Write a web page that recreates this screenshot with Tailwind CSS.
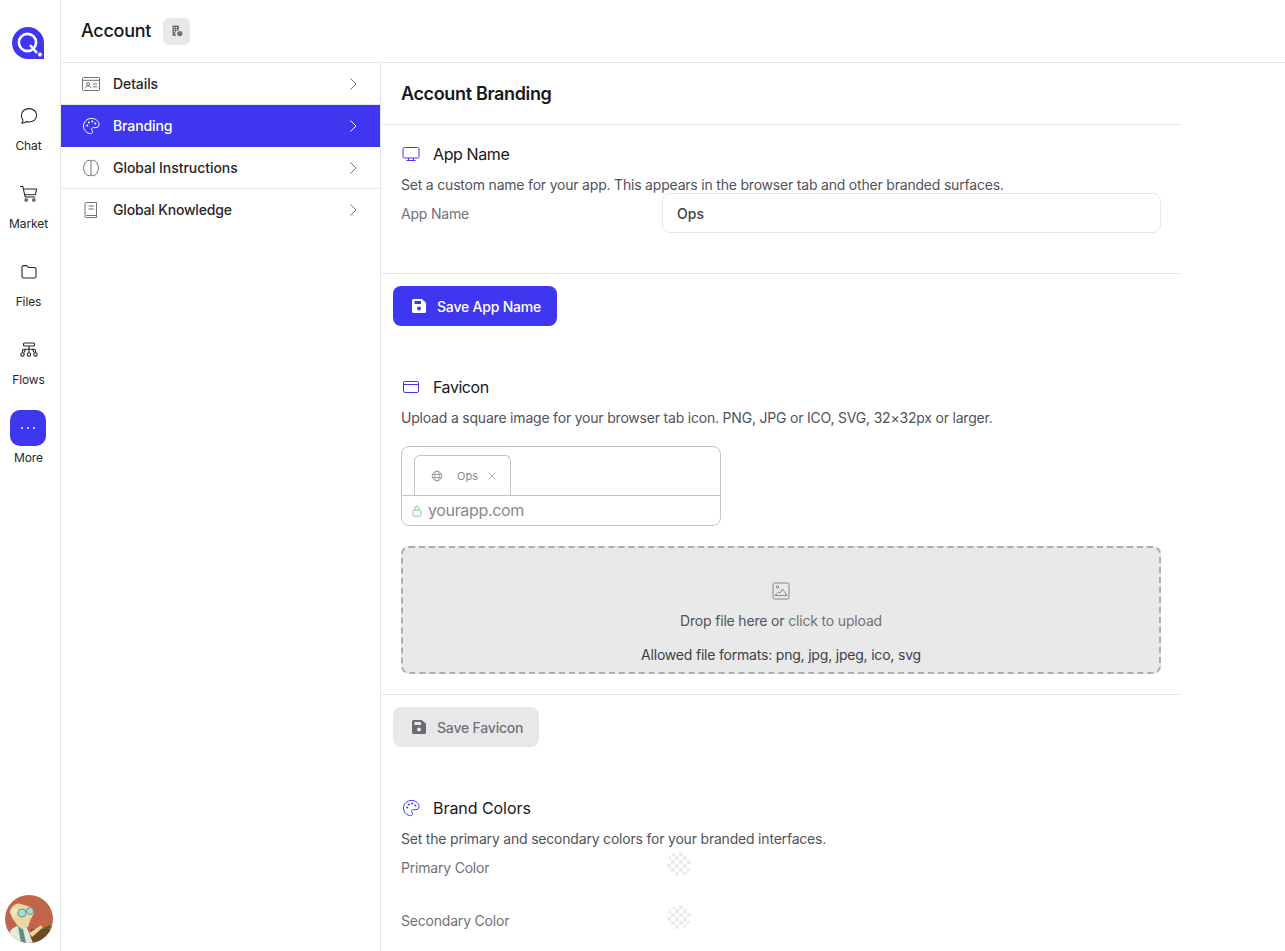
<!DOCTYPE html>
<html lang="en">
<head>
<meta charset="utf-8">
<title>Account Branding</title>
<script src="https://cdn.jsdelivr.net/npm/@tailwindcss/browser@4"></script>
</head>
<body class="bg-white">
<div class="flex h-[951px] w-[1285px] overflow-hidden bg-white font-['Inter',sans-serif] text-[#18181b] antialiased">

  <!-- Icon rail -->
  <aside class="flex h-full w-[61px] shrink-0 flex-col items-center border-r border-[#e8e8e8] bg-white pr-[3px]">
    <svg class="-ml-[2px] mt-[27px] h-[32px] w-[32px]" viewBox="0 0 32 32">
      <path d="M16 0C7.2 0 0 7.2 0 16s7.2 16 16 16h16V16C32 7.2 24.8 0 16 0z" fill="#3f37f0"/>
      <circle cx="15.5" cy="15.5" r="8.6" fill="none" stroke="#fff" stroke-width="2.6"/>
      <path d="M18 18l7 8" stroke="#fff" stroke-width="2.6"/>
      <path d="M28 25l2.5 2.5L28 30l-2.5-2.5z" fill="#fff"/>
    </svg>
    <nav class="mt-[39px] flex flex-col items-center">
      <div class="flex h-[78px] w-[57px] flex-col items-center pt-[8px]">
        <div class="flex h-[20px] w-[20px] items-center justify-center">
          <svg class="h-[20px] w-[20px]" viewBox="0 0 20 20" fill="none" stroke="#27272a" stroke-width="1.1" stroke-linejoin="round"><path d="M10 2.600c4.400 0 7.600 2.900 7.600 6.700S14.400 16 10 16c-1 0-1.900-.2-2.800-.4-1 .8-2.600 1.400-4.400 1.600.7-.9 1.100-1.900 1.200-3C2.900 13 2.400 11.300 2.400 9.300 2.400 5.500 5.600 2.600 10 2.600z"/></svg>
        </div>
        <span class="mt-[12px] text-[12px] leading-[16px] tracking-[-0.1px] text-[#27272a]">Chat</span>
      </div>
      <div class="flex h-[78px] w-[57px] flex-col items-center pt-[8px]">
        <svg class="h-[20px] w-[20px]" viewBox="0 0 20 20" fill="none" stroke="#27272a" stroke-width="1.1" stroke-linecap="round" stroke-linejoin="round"><path d="M1.500 2.500h2.300l2.400 10.500h9.600"/><path d="M4.400 5h13.200l-1.300 5.700H5.700"/><circle cx="7.200" cy="16" r="1.200"/><circle cx="14.800" cy="16" r="1.200"/></svg>
        <span class="mt-[12px] text-[12px] leading-[16px] tracking-[-0.1px] text-[#27272a]">Market</span>
      </div>
      <div class="flex h-[78px] w-[57px] flex-col items-center pt-[8px]">
        <svg class="h-[20px] w-[20px]" viewBox="0 0 20 20" fill="none" stroke="#27272a" stroke-width="1.1" stroke-linejoin="round"><path d="M3 5.200c0-.9.700-1.600 1.600-1.600h3.200l1.700 1.900h5.900c.9 0 1.600.7 1.600 1.600v7.300c0 .9-.7 1.600-1.600 1.600H4.600c-.9 0-1.600-.7-1.600-1.600z"/></svg>
        <span class="mt-[12px] text-[12px] leading-[16px] tracking-[-0.1px] text-[#27272a]">Files</span>
      </div>
      <div class="flex h-[78px] w-[57px] flex-col items-center pt-[8px]">
        <svg class="h-[20px] w-[20px]" viewBox="0 0 20 20" fill="none" stroke="#27272a" stroke-width="1.1" stroke-linejoin="round"><rect x="4.500" y="3" width="11" height="3" rx="1"/><path d="M10 6v3M3.500 12.500V10.500c0-.8.500-1.300 1.300-1.300h10.400c.8 0 1.300.5 1.300 1.300v2M10 9v3.500M6.500 9.200l-1.500 3.300M13.500 9.200l1.500 3.300"/><circle cx="3.500" cy="14.500" r="1.700"/><circle cx="10" cy="14.500" r="1.700"/><circle cx="16.500" cy="14.500" r="1.700"/></svg>
        <span class="mt-[12px] text-[12px] leading-[16px] tracking-[-0.1px] text-[#27272a]">Flows</span>
      </div>
      <div class="flex w-[57px] flex-col items-center">
        <div class="-ml-[2px] flex h-[36px] w-[36px] items-center justify-center gap-[4px] rounded-[10px] bg-[#3f37f0]">
          <span class="h-[2px] w-[2px] rounded-full bg-white"></span>
          <span class="h-[2px] w-[2px] rounded-full bg-white"></span>
          <span class="h-[2px] w-[2px] rounded-full bg-white"></span>
        </div>
        <span class="mt-[4px] text-[12px] leading-[16px] tracking-[-0.1px] text-[#27272a]">More</span>
      </div>
    </nav>
    <svg class="mb-[8px] mt-auto h-[48px] w-[48px]" viewBox="0 0 48 48">
      <defs><clipPath id="av"><circle cx="24" cy="24" r="24"/></clipPath></defs>
      <g clip-path="url(#av)">
        <rect width="48" height="48" fill="#c0654c"/>
        <path d="M26 34h22v14H24z" fill="#6b4a25"/>
        <path d="M2 48c0-10 4-16 12-17l8 2 6 15z" fill="#e4e8e0"/>
        <path d="M13 31l5 3 3 14h-5z" fill="#5f8f7a"/>
        <path d="M5 17c1-6 6-10 11-8l10 3 3 6-4 8-2 6-6 2-5-4-4-6z" fill="#ecd6a0"/>
        <path d="M5 17c2-3 5-5 8-3l-2 5-3 5z" fill="#f2e6c0"/>
        <circle cx="17" cy="18" r="4" fill="#a9dcd6" stroke="#5f9a94" stroke-width="1"/>
        <circle cx="25" cy="16" r="3.500" fill="#a9dcd6" stroke="#5f9a94" stroke-width="1"/>
        <path d="M24 38l8-5 4-3 2 2-4 4-7 6z" fill="#ecd6a0"/>
        <path d="M35 29l8-1 3 3-8 2z" fill="#d9622b"/>
        <path d="M38 33l7-3 2 2-6 3z" fill="#3f6b35"/>
      </g>
    </svg>
  </aside>

  <div class="flex min-w-0 flex-1 flex-col">
    <!-- Header -->
    <header class="flex h-[63px] shrink-0 items-center border-b border-[#e8e8e8] pl-[20px]">
      <h1 class="text-[18px] font-medium leading-[28px] tracking-[-0.28px] text-[#18181b]">Account</h1>
      <div class="ml-[12px] flex h-[27px] w-[27px] items-center justify-center rounded-[6px] bg-[#e8e8e8]">
        <svg class="h-[12px] w-[12px]" viewBox="0 0 12 12"><path d="M1.500 1.200c0-.4.300-.7.700-.7h5c.4 0 .7.300.7.700v4.100A3.300 3.300 0 0 0 5.200 11H2.200c-.4 0-.7-.3-.7-.7z" fill="#71717a"/><circle cx="8.800" cy="8.600" r="2.700" fill="#71717a"/><path d="M3 2.500h1M5 2.500h1M3 4.500h1M5 4.500h1M3 6.500h1" stroke="#e8e8e8" stroke-width="1"/></svg>
      </div>
    </header>

    <div class="flex min-h-0 flex-1">
      <!-- Secondary nav -->
      <aside class="h-full w-[320px] shrink-0 border-r border-[#e8e8e8]">
        <div class="flex h-[42px] items-center border-b border-[#e8e8e8] pl-[20px] pr-[19px]">
          <svg class="h-[20px] w-[20px] shrink-0" viewBox="0 0 20 20" fill="none" stroke="#71717a" stroke-width="1"><rect x="1.500" y="3.500" width="17" height="13" rx="1.200"/><path d="M1.500 6.300h17M11.800 10h4.500M11.800 12.800h4.500"/><circle cx="7" cy="10" r="1.500"/><path d="M4 14.300c.3-1.500 1.500-2.300 3-2.300s2.700.8 3 2.300"/></svg>
          <span class="ml-[12px] flex-1 text-[14px] font-medium leading-[20px] tracking-[-0.1px] text-[#27272a]">Details</span>
          <svg class="h-[16px] w-[16px]" viewBox="0 0 16 16" fill="none" stroke="#71717a" stroke-width="1"><path d="M5.500 2.500L11 8l-5.500 5.500"/></svg>
        </div>
        <div class="flex h-[42px] items-center bg-[#3f37f0] pl-[20px] pr-[19px]">
          <svg class="h-[20px] w-[20px] shrink-0" viewBox="0 0 20 20" fill="none" stroke="#fff" stroke-width="1"><path d="M10.500 2.400c-4.400 0-8 3.400-8 7.600s3.400 7.600 7.200 7.600c1.300 0 1.900-.8 1.900-1.700 0-1.200-1-1.600-1-2.700 0-1 .8-1.600 1.900-1.600h2.400c1.800 0 3.100-1.100 3.100-2.800 0-3.500-3.400-6.400-7.500-6.400z"/><g fill="#fff" stroke="none"><circle cx="6.200" cy="9.600" r="1"/><circle cx="7.900" cy="6.500" r="1"/><circle cx="11.300" cy="5.500" r="1"/><circle cx="14.300" cy="7.400" r="1"/></g></svg>
          <span class="ml-[12px] flex-1 text-[14px] font-medium leading-[20px] tracking-[-0.1px] text-white">Branding</span>
          <svg class="h-[16px] w-[16px]" viewBox="0 0 16 16" fill="none" stroke="#fff" stroke-width="1"><path d="M5.500 2.500L11 8l-5.500 5.500"/></svg>
        </div>
        <div class="flex h-[42px] items-center border-b border-[#e8e8e8] pl-[20px] pr-[19px]">
          <svg class="h-[20px] w-[20px] shrink-0" viewBox="0 0 20 20" fill="none" stroke="#71717a" stroke-width="1"><path d="M10 3v14"/><path d="M10 3C9.100 2 7 2 6 3.200 4.600 3.500 3.800 4.800 3.900 6.200 2.800 7.200 2.500 8.600 2.600 10c-.1 1.400.2 2.800 1.300 3.800-.1 1.400.7 2.700 2.100 3C7 18 9.100 18 10 17c.9 1 3 1 4-.2 1.400-.3 2.200-1.600 2.100-3 1.100-1 1.400-2.400 1.300-3.800.1-1.400-.2-2.800-1.300-3.800.1-1.400-.7-2.700-2.100-3C13 2 10.900 2 10 3z"/></svg>
          <span class="ml-[12px] flex-1 text-[14px] font-medium leading-[20px] tracking-[-0.05px] text-[#27272a]">Global Instructions</span>
          <svg class="h-[16px] w-[16px]" viewBox="0 0 16 16" fill="none" stroke="#71717a" stroke-width="1"><path d="M5.500 2.500L11 8l-5.500 5.500"/></svg>
        </div>
        <div class="flex h-[42px] items-center pl-[20px] pr-[19px]">
          <svg class="h-[20px] w-[20px] shrink-0" viewBox="0 0 20 20" fill="none" stroke="#71717a" stroke-width="1"><path d="M4 15.500V3.700c0-.7.500-1.200 1.200-1.200h10.300v13H5.300C4.600 15.500 4 16 4 16.600s.6 1 1.300 1h10.200v-2"/><path d="M7.500 6h5.500M7.500 9h5.500"/></svg>
          <span class="ml-[12px] flex-1 text-[14px] font-medium leading-[20px] tracking-[-0.18px] text-[#27272a]">Global Knowledge</span>
          <svg class="h-[16px] w-[16px]" viewBox="0 0 16 16" fill="none" stroke="#71717a" stroke-width="1"><path d="M5.500 2.500L11 8l-5.500 5.500"/></svg>
        </div>
      </aside>

      <!-- Main -->
      <main class="w-[800px] shrink-0">
        <div class="flex h-[62px] items-center border-b border-[#e8e8e8] px-[20px]">
          <h2 class="text-[18px] font-semibold leading-[28px] tracking-[-0.35px] text-[#18181b]">Account Branding</h2>
        </div>

        <!-- App Name -->
        <section class="h-[149px] border-b border-[#e8e8e8] px-[20px] pt-[19px]">
          <div class="flex h-[20px] items-center">
            <svg class="h-[20px] w-[20px] shrink-0" viewBox="0 0 20 20" fill="none" stroke="#3f37f0" stroke-width="1"><rect x="2" y="3.500" width="16" height="10.500" rx="1.500"/><path d="M7.500 14v2.500M12.500 14v2.500M5.500 16.500h9"/></svg>
            <h3 class="ml-[12px] text-[16px] leading-[24px] tracking-[-0.4px] text-[#18181b]">App Name</h3>
          </div>
          <p class="mt-[11px] h-[20px] text-[14px] leading-[20px] tracking-[-0.2px] text-[#52525b]">Set a custom name for your app. This appears in the browser tab and other branded surfaces.</p>
          <div class="-mt-[2px] flex items-center">
            <label class="relative top-[1px] w-[261px] shrink-0 text-[14px] leading-[20px] tracking-[-0.2px] text-[#71717a]">App Name</label>
            <div class="flex h-[40px] w-[499px] items-center rounded-[8px] border border-[#e8e8e8] px-[14px] text-[14px] font-medium text-[#3f3f46]">Ops</div>
          </div>
        </section>

        <div class="px-[12px] pt-[12px]">
          <button class="flex h-[40px] items-center gap-[10px] rounded-[8px] bg-[#3f37f0] pl-[18px] pr-[16px] text-[14px] font-medium tracking-[-0.2px] text-white">
            <svg class="h-[16px] w-[16px]" viewBox="0 0 16 16"><path d="M2.500 1h8.300L15 4.700v8.800c0 .8-.7 1.500-1.500 1.500h-11C1.700 15 1 14.300 1 13.500v-11C1 1.700 1.700 1 2.500 1z" fill="#fff"/><rect x="3.500" y="3" width="6.500" height="3" rx=".5" fill="#3f37f0"/><circle cx="8" cy="10.500" r="2" fill="#3f37f0"/></svg>
            Save App Name
          </button>
        </div>

        <!-- Favicon -->
        <section class="h-[369px] border-b border-[#e8e8e8] px-[20px] pt-[51px]">
          <div class="flex h-[20px] items-center">
            <svg class="h-[20px] w-[20px] shrink-0" viewBox="0 0 20 20" fill="none" stroke="#3f37f0" stroke-width="1"><rect x="2.500" y="4.500" width="15" height="11" rx="1.500"/><path d="M2.500 7.500h15"/></svg>
            <h3 class="ml-[12px] text-[16px] leading-[24px] tracking-[-0.45px] text-[#18181b]">Favicon</h3>
          </div>
          <p class="mt-[11px] text-[14px] leading-[20px] tracking-[-0.2px] text-[#52525b]">Upload a square image for your browser tab icon. PNG, JPG or ICO, SVG, 32×32px or larger.</p>
          <div class="mt-[18px] h-[80px] w-[320px] overflow-hidden rounded-[8px] border border-[#c4c4c4]">
            <div class="h-[49px] border-b border-[#c4c4c4] pl-[12px] pt-[8px]">
              <div class="flex h-[40px] w-[97px] items-center rounded-t-[6px] border border-b-0 border-[#c4c4c4] pl-[16px]">
                <svg class="h-[12px] w-[12px] shrink-0" viewBox="0 0 12 12" fill="none" stroke="#8a8a8a" stroke-width=".8"><circle cx="6" cy="6" r="4.800"/><ellipse cx="6" cy="6" rx="2.200" ry="4.800"/><path d="M1.200 4.500h9.600M1.200 7.500h9.600"/></svg>
                <span class="ml-[14px] text-[11px] leading-[16px] text-[#8a8a8a]">Ops</span>
                <svg class="ml-[10px] h-[8px] w-[8px]" viewBox="0 0 8 8" fill="none" stroke="#a3a3a3" stroke-width=".8"><path d="M.5.500l7 7M7.500.500l-7 7"/></svg>
              </div>
            </div>
            <div class="flex h-[29px] items-center pl-[10px]">
              <svg class="h-[12px] w-[10px] shrink-0" viewBox="0 0 10 12" fill="none" stroke="#6fcf8e" stroke-width="1"><rect x="1" y="5" width="8" height="6.200" rx="1.500"/><path d="M3 5V3.200a2 2 0 0 1 4 0V5"/></svg>
              <span class="relative top-[-1px] ml-[6px] text-[16px] leading-[24px] tracking-[-0.35px] text-[#8a8a8a]">yourapp.com</span>
            </div>
          </div>
          <div class="mt-[20px] flex h-[128px] w-[760px] flex-col items-center rounded-[8px] border-2 border-dashed border-[#adadad] bg-[#e9e9e9] pt-[34px]">
            <svg class="h-[18px] w-[18px]" viewBox="0 0 18 18" fill="none" stroke="#85858b" stroke-width="1"><rect x="1" y="1" width="16" height="16" rx="1.500"/><circle cx="5.500" cy="5" r="1.200"/><path d="M3 13.500l3.500-3.500 1.500 1 2.500-4 4.500 6.500z"/></svg>
            <p class="mt-[11px] text-[14px] leading-[20px] tracking-[-0.17px] text-[#52525b]">Drop file here or <span class="text-[#71717a]">click to upload</span></p>
            <p class="mt-[14px] text-[14px] leading-[20px] tracking-[-0.2px] text-[#3f3f46]">Allowed file formats: png, jpg, jpeg, ico, svg</p>
          </div>
        </section>

        <div class="px-[12px] pt-[12px]">
          <button class="flex h-[40px] items-center gap-[10px] rounded-[8px] bg-[#e8e8e8] pl-[18px] pr-[16px] text-[14px] font-medium tracking-[-0.2px] text-[#71717a]">
            <svg class="h-[16px] w-[16px]" viewBox="0 0 16 16"><path d="M2.500 1h8.300L15 4.700v8.800c0 .8-.7 1.500-1.500 1.500h-11C1.700 15 1 14.300 1 13.500v-11C1 1.700 1.700 1 2.500 1z" fill="#6b6b76"/><rect x="3.500" y="3" width="6.500" height="3" rx=".5" fill="#e8e8e8"/><circle cx="8" cy="10.500" r="2" fill="#e8e8e8"/></svg>
            Save Favicon
          </button>
        </div>

        <!-- Brand Colors -->
        <section class="px-[20px] pt-[51px]">
          <div class="flex h-[20px] items-center">
            <svg class="h-[20px] w-[20px] shrink-0" viewBox="0 0 20 20" fill="none" stroke="#3f37f0" stroke-width="1"><path d="M10.500 2.400c-4.400 0-8 3.400-8 7.600s3.400 7.600 7.200 7.600c1.300 0 1.900-.8 1.900-1.700 0-1.200-1-1.600-1-2.700 0-1 .8-1.600 1.900-1.600h2.400c1.800 0 3.100-1.100 3.100-2.800 0-3.500-3.400-6.400-7.500-6.400z"/><g fill="#3f37f0" stroke="none"><circle cx="6.200" cy="9.600" r="1"/><circle cx="7.900" cy="6.500" r="1"/><circle cx="11.300" cy="5.500" r="1"/><circle cx="14.300" cy="7.400" r="1"/></g></svg>
            <h3 class="ml-[12px] text-[16px] leading-[24px] tracking-[-0.05px] text-[#18181b]">Brand Colors</h3>
          </div>
          <p class="mt-[11px] text-[14px] leading-[20px] tracking-[-0.2px] text-[#52525b]">Set the primary and secondary colors for your branded interfaces.</p>
          <div class="flex h-[53px] items-start">
            <label class="mt-[-1px] w-[266px] shrink-0 pt-[10px] text-[14px] leading-[20px] tracking-[-0.2px] text-[#71717a]">Primary Color</label>
            <div class="mt-[3px] h-[24px] w-[24px] rounded-full bg-[repeating-conic-gradient(#ececec_0%_25%,#ffffff_0%_50%)] bg-[length:8px_8px]"></div>
          </div>
          <div class="flex h-[53px] items-start">
            <label class="mt-[-1px] w-[266px] shrink-0 pt-[10px] text-[14px] leading-[20px] tracking-[-0.2px] text-[#71717a]">Secondary Color</label>
            <div class="mt-[3px] h-[24px] w-[24px] rounded-full bg-[repeating-conic-gradient(#ececec_0%_25%,#ffffff_0%_50%)] bg-[length:8px_8px]"></div>
          </div>
        </section>
      </main>
    </div>
  </div>
</div>
</body>
</html>
